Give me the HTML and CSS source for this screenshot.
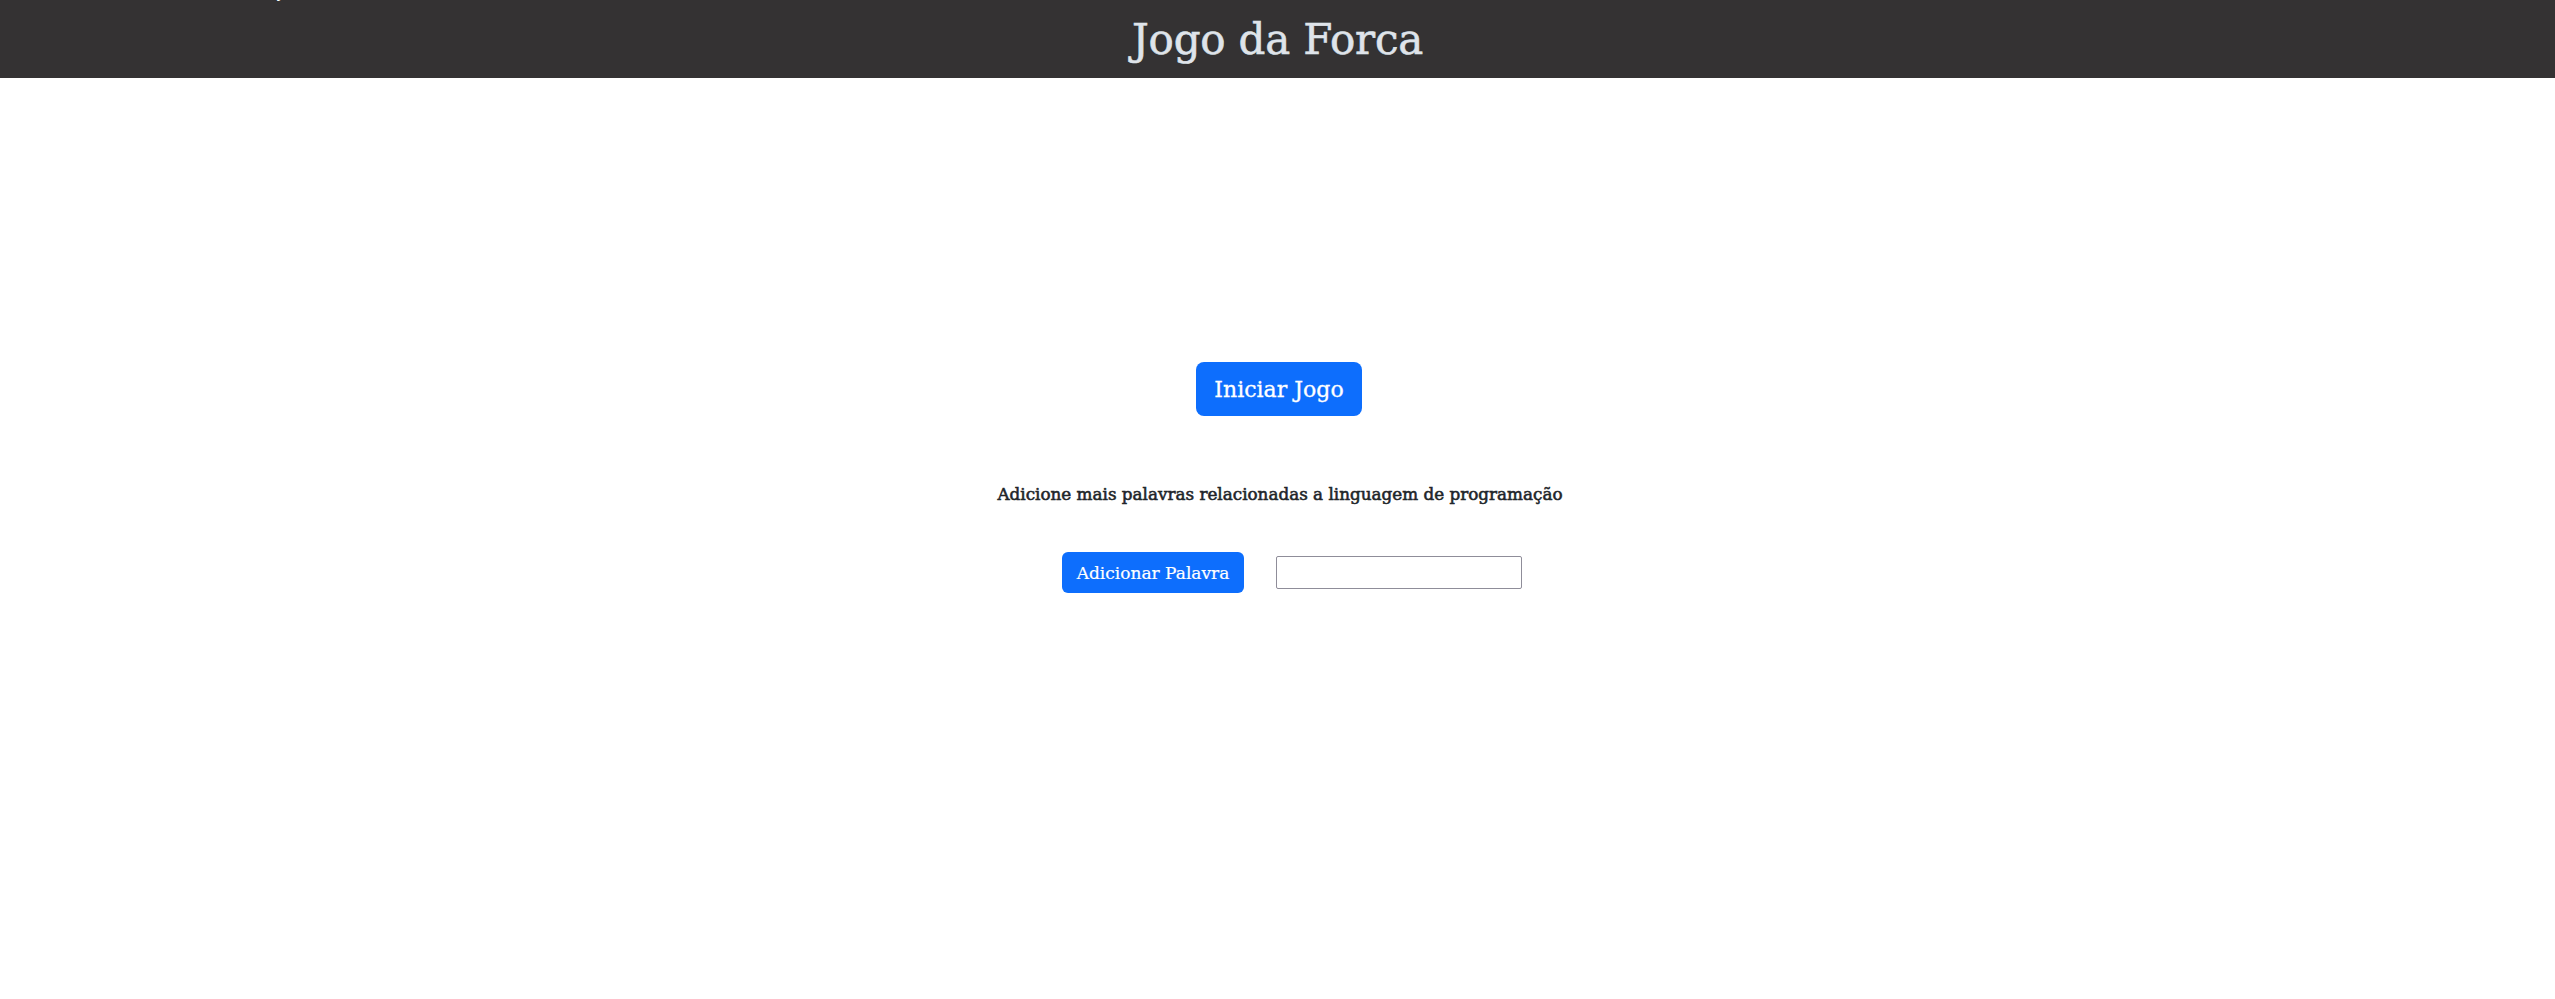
FILE: index.html
```html
<!DOCTYPE html>
<html lang="pt-BR">
<head>
<meta charset="utf-8">
<title>Jogo da Forca</title>
<link rel="stylesheet" href="styles.css">
</head>
<body>
<header class="topbar">
  <span class="stray">ç</span>
  <h1 class="title">Jogo da Forca</h1>
</header>
<main class="content">
  <button class="btn btn-start">Iniciar Jogo</button>
  <p class="hint">Adicione mais palavras relacionadas a linguagem de programação</p>
  <div class="add-row">
    <button class="btn btn-add">Adicionar Palavra</button>
    <input class="word-input" type="text">
  </div>
</main>
</body>
</html>
```
FILE: styles.css
```css
* { box-sizing: border-box; }
html, body { margin: 0; padding: 0; background: #fff; }
body { font-family: "DejaVu Serif", "Liberation Serif", serif; color: #212529; }

.topbar {
  position: relative;
  height: 78px;
  background: #343233;
  display: flex;
  align-items: center;
  justify-content: center;
  overflow: hidden;
}
.title {
  margin: 0;
  font-size: 42px;
  font-weight: 400;
  color: #dfe4ea;
  line-height: 1;
  padding-top: 2px;
  letter-spacing: -0.2px;
  -webkit-text-stroke: 0.6px #dfe4ea;
}
.stray {
  position: absolute;
  left: 274px;
  top: -16px;
  font-size: 16px;
  color: #fff;
  line-height: 1;
}

.content {
  display: flex;
  flex-direction: column;
  align-items: center;
  padding-top: 284px;
}
.btn {
  font-family: "DejaVu Serif", "Liberation Serif", serif;
  background: #0d6efd;
  color: #fff;
  border: none;
  cursor: pointer;
}
.btn-start {
  width: 166px;
  height: 54px;
  border-radius: 8px;
  font-size: 22px;
  padding: 0;
  margin-left: 3px;
  -webkit-text-stroke: 0.3px #fff;
}
.hint {
  margin: 66px 0 0 0;
  font-size: 16.8px;
  font-weight: 400;
  line-height: 24px;
  margin-left: 5px;
  -webkit-text-stroke: 0.55px #212529;
}
.add-row {
  display: flex;
  align-items: center;
  gap: 32px;
  margin-top: 46px;
  margin-left: 29px;
}
.btn-add {
  width: 182px;
  height: 41px;
  border-radius: 6px;
  font-size: 17px;
  padding: 0;
  -webkit-text-stroke: 0.2px #fff;
}
.word-input {
  width: 246px;
  height: 33px;
  border: 1px solid #8f8d99;
  border-radius: 2px;
  padding: 2px 6px;
  font-size: 16px;
}
```
